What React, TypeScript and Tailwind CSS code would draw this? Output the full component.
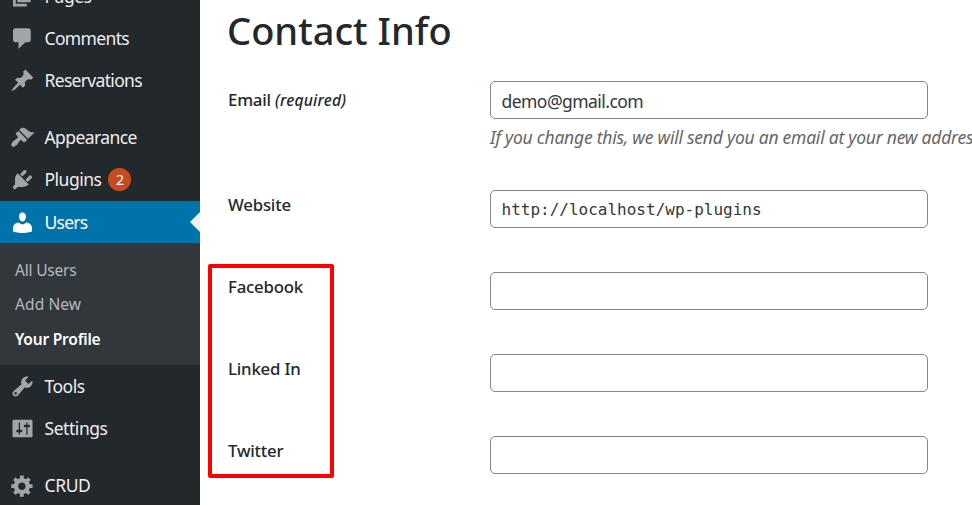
import type { ReactNode } from "react";

const icons = {
  page: "M5.8 2h10.7v12.5H5.8V2zM4.6 4v11.8h8.8v2.1H2.4V4h2.2z",
  comments: "M4.4 1.8h10.2c1.1 0 2 .9 2 2v7.1c0 1.1-.9 2-2 2h-2.3L6.8 18.3v-5.4H4.4c-1.1 0-2-.9-2-2V3.8c0-1.1.9-2 2-2z",
  pin: "M10.44 3.02l1.82-1.82 6.36 6.35-1.83 1.82c-1.05-.68-2.48-.57-3.41.36l-.75.75c-.92.93-1.04 2.35-.35 3.41l-1.83 1.82-2.41-2.41-2.8 2.79c-.42.42-3.38 2.71-3.8 2.29s1.86-3.39 2.28-3.81l2.79-2.79L4.1 9.36l1.83-1.82c1.05.69 2.48.57 3.4-.36l.75-.75c.93-.92 1.05-2.35.36-3.41z",
  brush: "M14.48 11.06L7.41 3.99l1.5-1.5c.5-.56 2.3-.47 3.51.32 1.21.8 1.43 1.28 2.91 2.1 1.18.64 2.45 1.26 4.45.85zm-.71.71L6.7 4.7 4.93 6.47c-.39.39-.39 1.02 0 1.41l1.06 1.06c.39.39.39 1.03 0 1.42-.6.6-1.43 1.11-2.21 1.69-.35.26-.7.53-1.01.84C1.43 14.23.4 16.08 1.4 17.07c.99 1 2.84-.03 4.18-1.36.31-.31.58-.66.85-1.02.57-.78 1.08-1.61 1.69-2.21.39-.39 1.02-.39 1.41 0l1.06 1.06c.39.39 1.02.39 1.41 0z",
  plug: "M13.11 4.36L9.87 7.6 8 5.73l3.24-3.24c.35-.34 1.05-.2 1.56.32.52.51.66 1.21.31 1.55zm-8 1.77l.91-1.12 9.01 9.01-1.19.84c-.71.71-2.63 1.16-3.82 1.16H6.14L4.9 17.26c-.59.59-1.54.59-2.12 0-.59-.58-.59-1.53 0-2.12l1.24-1.24v-3.88c0-1.13.4-3.19 1.09-3.89zm7.26 3.97l3.24-3.24c.34-.35 1.04-.21 1.55.31.52.51.66 1.21.31 1.55l-3.24 3.25z",
  user: "M10 9.25c-2.27 0-2.73-3.44-2.73-3.44C7 4.02 7.82 2 9.97 2c2.16 0 2.98 2.02 2.71 3.81 0 0-.41 3.44-2.68 3.44zM7.2 9.9c.7.9 1.6 1.5 2.8 1.5s2.1-.6 2.8-1.5c2.9.1 4.8 2.2 4.8 4.5v2.8s-3.7 1.2-7.6 1.2-7.6-1.2-7.6-1.2v-2.8c0-2.3 1.9-4.4 4.8-4.5z",
  wrench: "M16.68 9.77c-1.34 1.34-3.3 1.67-4.95.99l-5.41 6.52c-.99.99-2.59.99-3.58 0s-.99-2.59 0-3.57l6.52-5.42c-.68-1.65-.35-3.61.99-4.95 1.28-1.28 3.12-1.62 4.72-1.06l-2.89 2.89 2.82 2.82 2.86-2.87c.53 1.58.18 3.39-1.08 4.65zM3.81 16.21c.4.39 1.04.39 1.43 0 .4-.4.4-1.04 0-1.43-.39-.4-1.03-.4-1.43 0-.39.39-.39 1.03 0 1.43z",
  sliders: "M18 16V4c0-.55-.45-1-1-1H3c-.55 0-1 .45-1 1v12c0 .55.45 1 1 1h14c.55 0 1-.45 1-1zM8 11h1c.55 0 1 .45 1 1s-.45 1-1 1H8v1.5c0 .28-.22.5-.5.5s-.5-.22-.5-.5V13H6c-.55 0-1-.45-1-1s.45-1 1-1h1V5.5c0-.28.22-.5.5-.5s.5.22.5.5V11zm5-2h-1c-.55 0-1-.45-1-1s.45-1 1-1h1V5.5c0-.28.22-.5.5-.5s.5.22.5.5V7h1c.55 0 1 .45 1 1s-.45 1-1 1h-1v5.5c0 .28-.22.5-.5.5s-.5-.22-.5-.5V9z",
  gear: "M18 12h-2.18c-.17.7-.44 1.35-.81 1.93l1.54 1.54-2.1 2.1-1.54-1.54c-.58.36-1.23.63-1.91.79V19H8v-2.18c-.68-.16-1.33-.43-1.91-.79l-1.54 1.54-2.12-2.12 1.54-1.54c-.36-.58-.63-1.23-.79-1.91H1V9.03h2.17c.16-.7.44-1.35.8-1.94L2.43 5.55l2.1-2.1 1.54 1.54c.58-.37 1.24-.64 1.93-.81V2h3v2.18c.68.16 1.33.43 1.91.79l1.54-1.54 2.12 2.12-1.54 1.54c.36.59.64 1.24.8 1.94H18V12zm-8.5 1.5c1.66 0 3-1.34 3-3s-1.34-3-3-3-3 1.34-3 3 1.34 3 3 3z",
};

type MenuItemProps = {
  icon: keyof typeof icons;
  label: string;
  spacing?: string;
  current?: boolean;
  children?: ReactNode;
};

function MenuItem({ icon, label, spacing = "tracking-[-0.5px]", current, children }: MenuItemProps) {
  return (
    <a
      className={`relative flex h-[42.25px] shrink-0 items-center pl-[10px] text-[17.5px] ${
        current ? "bg-[#0073aa] pt-px text-white" : "text-[#eeeeee]"
      }`}
    >
      <svg
        viewBox="0 0 20 20"
        className={`h-[25px] w-[25px] shrink-0 ${current ? "fill-white" : "fill-[#a0a5aa]"}`}
      >
        <path d={icons[icon]} />
      </svg>
      <span className={`ml-[9.5px] whitespace-nowrap leading-none ${spacing}`}>{label}</span>
      {children}
    </a>
  );
}

type FieldProps = {
  label: ReactNode;
  value?: string;
  inputStyle?: string;
  rowStyle?: string;
  labelStyle?: string;
  note?: string;
};

function Field({ label, value = "", inputStyle = "", rowStyle = "h-[82px]", labelStyle = "pt-[3px]", note }: FieldProps) {
  return (
    <div className={`flex shrink-0 ${rowStyle}`}>
      <label className={`w-[262px] shrink-0 whitespace-nowrap text-[16.8px] font-medium leading-6 tracking-[-0.2px] text-[#23282d] ${labelStyle}`}>
        {label}
      </label>
      <div className="min-w-0">
        <input
          readOnly
          value={value}
          className={`block h-[38px] w-[438px] rounded-[5px] border border-[#7e8993] bg-white px-[10.5px] text-[#32373c] outline-none ${inputStyle}`}
        />
        {note && (
          <p className="mt-[6px] whitespace-nowrap text-[17.5px] italic leading-6 tracking-[-0.24px] text-[#666666]">{note}</p>
        )}
      </div>
    </div>
  );
}

export default function App() {
  return (
    <div className="relative flex h-[505px] w-[972px] overflow-hidden bg-white font-['Noto_Sans','Open_Sans',sans-serif]">
      <nav className="flex w-[200px] shrink-0 flex-col overflow-hidden bg-[#23282d]">
        <div className="-mt-[25px] flex flex-col">
          <MenuItem icon="page" label="Pages" spacing="pt-[2px] tracking-[-0.5px]" />
          <MenuItem icon="comments" label="Comments" spacing="tracking-[-0.65px]" />
          <MenuItem icon="pin" label="Reservations" spacing="tracking-[-0.68px]" />
        </div>
        <div className="mt-[14.5px] flex flex-col">
          <MenuItem icon="brush" label="Appearance" spacing="tracking-[-0.58px]" />
          <MenuItem icon="plug" label="Plugins">
            <span className="ml-[7px] flex h-[23px] w-[23px] items-center justify-center rounded-full bg-[#ca4a1f] text-[14px] leading-none text-white">
              2
            </span>
          </MenuItem>
          <MenuItem icon="user" label="Users" spacing="tracking-[-0.75px]" current>
            <span className="absolute right-0 top-[11px] h-0 w-0 border-y-[10px] border-r-[10px] border-y-transparent border-r-[#f1f1f1]" />
          </MenuItem>
        </div>
        <div className="flex h-[122px] shrink-0 flex-col bg-[#32373c] pl-[15px] pt-[10px] text-[15.5px] leading-[34.4px] tracking-[-0.2px] text-[#b4b9be]">
          <a>All Users</a>
          <a className="tracking-[0.1px]">Add New</a>
          <a className="font-semibold text-white">Your Profile</a>
        </div>
        <MenuItem icon="wrench" label="Tools" spacing="pt-[2px] tracking-[-0.5px]" />
        <MenuItem icon="sliders" label="Settings" spacing="tracking-[-0.45px]" />
        <div className="mt-[14.5px]">
          <MenuItem icon="gear" label="CRUD" spacing="pt-[2px] tracking-[-0.4px]" />
        </div>
      </nav>

      <main className="flex min-w-0 flex-1 flex-col overflow-hidden pl-[28px]">
        <h2 className="-ml-px h-[81px] shrink-0 pt-[6px] text-[38px] font-medium leading-[48px] text-[#23282d]">Contact Info</h2>
        <Field
          rowStyle="h-[109px]"
          labelStyle="pt-[6.5px]"
          label={
            <>
              Email <em className="text-[15.6px] tracking-[0.2px]">(required)</em>
            </>
          }
          value="demo@gmail.com"
          inputStyle="pt-[2px] text-[17.5px] tracking-[-0.55px]"
          note="If you change this, we will send you an email at your new address to confirm it."
        />
        <Field
          label="Website"
          value="http://localhost/wp-plugins"
          inputStyle="font-['DejaVu_Sans_Mono',monospace] text-[16px]"
        />
        <Field label="Facebook" />
        <Field label="Linked In" />
        <Field label="Twitter" />
      </main>

      <div className="pointer-events-none absolute left-[208px] top-[263.5px] h-[214px] w-[126px] rounded-[2px] border-4 border-[#ff0000]" />
    </div>
  );
}
